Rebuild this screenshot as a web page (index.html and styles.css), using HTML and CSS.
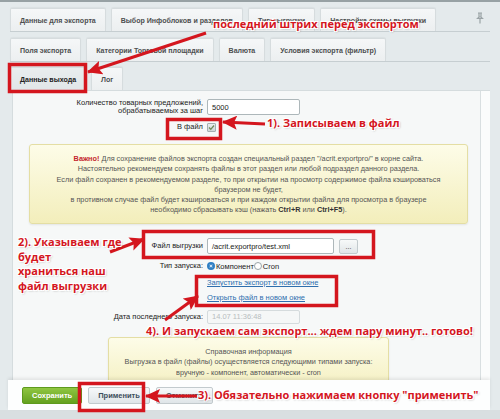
FILE: index.html
```html
<!DOCTYPE html>
<html lang="ru">
<head>
<meta charset="utf-8">
<title>Данные выхода</title>
<link rel="stylesheet" href="styles.css">
</head>
<body>
<div class="topline"></div>
<div class="wrap">
  <div class="tabrow r1">
    <div class="tab">Данные для экспорта</div>
    <div class="tab">Выбор Инфоблоков и разделов</div>
    <div class="tab">Тип выгрузки</div>
    <div class="tab">Настройка схемы выгрузки</div>
    <span class="pin"><svg width="8" height="12" viewBox="0 0 8 12"><path d="M2 1h4M3 1v4M5 1v4M1.5 6.5h5L5 5H3z M4 6.5V11.5" fill="none" stroke="#9aa3a6" stroke-width="1.2"/></svg></span>
  </div>
  <div class="tabrow r2">
    <div class="tab">Поля экспорта</div>
    <div class="tab">Категории Торговой площадки</div>
    <div class="tab">Валюта</div>
    <div class="tab">Условия экспорта (фильтр)</div>
  </div>
  <div class="tabrow r3">
    <div class="tab active">Данные выхода</div>
    <div class="tab">Лог</div>
  </div>
  <div class="panel">
    <div class="row r-count">
      <div class="lbl">Количество товарных предложений,<br>обрабатываемых за шаг</div>
      <div class="val"><span class="input w-num">5000</span></div>
    </div>
    <div class="row r-check">
      <div class="lbl">В файл</div>
      <div class="val"><span class="checkbox"><svg width="7" height="7" viewBox="0 0 7 7"><path d="M1 3.5l1.8 1.8L6 1.5" fill="none" stroke="#6f8a5a" stroke-width="1.3"/></svg></span></div>
    </div>
    <div class="notice n1">
      <p><b class="imp">Важно!</b> Для сохранение файлов экспорта создан специальный раздел "/acrit.exportpro/" в корне сайта.</p>
      <p>Настоятельно рекомендуем сохранять файлы в этот раздел или любой подраздел данного раздела.</p>
      <p>Если файл сохранен в рекомендуемом разделе, то при открытии на просмотр содержимое файла кэшироваться</p>
      <p>браузером не будет,</p>
      <p>в противном случае файл будет кэшироваться и при каждом открытии файла для просмотра в браузере</p>
      <p>необходимо сбрасывать кэш (нажать <b>Ctrl+R</b> или <b>Ctrl+F5</b>).</p>
    </div>
    <div class="row r-file">
      <div class="lbl">Файл выгрузки</div>
      <div class="val"><span class="input w-file">/acrit.exportpro/test.xml</span><span class="btn-dots">...</span></div>
    </div>
    <div class="row r-type">
      <div class="lbl">Тип запуска:</div>
      <div class="val"><span class="radio on"></span>Компонент<span class="radio"></span>Cron</div>
    </div>
    <div class="row r-link1">
      <div class="lbl"></div>
      <div class="val"><a class="link">Запустить экспорт в новом окне</a></div>
    </div>
    <div class="row r-link2">
      <div class="lbl"></div>
      <div class="val"><a class="link">Открыть файл в новом окне</a></div>
    </div>
    <div class="row r-date">
      <div class="lbl">Дата последнего запуска:</div>
      <div class="val"><span class="input dis w-num">14.07 11:36:48</span></div>
    </div>
    <div class="notice n2">
      <p>Справочная информация</p>
      <p>Выгрузка в файл (файлы) осуществляется следующими типами запуска:</p>
      <p>вручную - компонент, автоматически - cron</p>
    </div>
  </div>
</div>
<div class="footer">
  <span class="btn green">Сохранить</span>
  <span class="btn">Применить</span>
  <span class="btn">Отменить</span>
</div>
<div class="bottomline"></div>

<svg class="overlay" width="500" height="419" viewBox="0 0 500 419">
  <defs>
    <marker id="ah" markerUnits="userSpaceOnUse" markerWidth="16" markerHeight="14" refX="14" refY="7" orient="auto">
      <path d="M0 0L15 7L0 14L3 7z" fill="#d4161e"/>
    </marker>
  </defs>
  <g fill="none" stroke="#d4161e" stroke-width="3.5">
    <rect x="9.5" y="64.5" width="76" height="27"/>
    <rect x="167.5" y="119.5" width="53" height="19"/>
    <rect x="143.5" y="231.5" width="230" height="26"/>
    <rect x="196.5" y="276.5" width="140" height="29"/>
    <rect x="79.5" y="383.5" width="64" height="27"/>
  </g>
  <g stroke="#d4161e" stroke-width="3" marker-end="url(#ah)">
    <line x1="206" y1="33" x2="88" y2="72"/>
    <line x1="265" y1="124" x2="223" y2="122"/>
    <line x1="110" y1="252" x2="144" y2="239"/>
    <line x1="165" y1="320" x2="198" y2="296"/>
    <line x1="197" y1="396" x2="146" y2="396"/>
  </g>
</svg>
<div class="note t1">последний штрих перед экспортом</div>
<div class="note t2">1). Записываем в файл</div>
<div class="note t3">2). Указываем где<br>будет<br>храниться наш<br>файл выгрузки</div>
<div class="note t4">4). И запускаем сам экспорт... ждем пару минут.. готово!</div>
<div class="note t5">3). Обязательно нажимаем кнопку "применить"</div>
</body>
</html>
```
FILE: styles.css
```css
* { box-sizing: border-box; }
html, body { margin: 0; padding: 0; }
body {
  width: 500px;
  height: 419px;
  overflow: hidden;
  position: relative;
  background: #e4eaec;
  font-family: "Liberation Sans", Arial, sans-serif;
  font-size: 7.5px;
  color: #222;
}
.topline { height: 2px; background: #97a1a4; }
.wrap { padding: 0 10px 0 10px; }

.tabrow {
  display: flex;
  gap: 5px;
  align-items: flex-end;
  position: relative;
}
.r1 { margin-top: 6px; height: 24px; border-bottom: 1px solid #c6ced1; }
.r2 { margin-top: 6px; height: 24px; border-bottom: 1px solid #c6ced1; }
.r3 { margin-top: 5px; height: 23px; }
.tab {
  height: 23px;
  padding: 0 9px;
  display: flex;
  align-items: center;
  font-weight: bold;
  font-size: 7.05px;
  color: #4d4f50;
  background: linear-gradient(#f5f7f8, #eceff0);
  border: 1px solid #d6dcde;
  border-bottom: none;
  border-radius: 2px 2px 0 0;
  box-shadow: 0 -1px 1px rgba(0,0,0,0.04);
  white-space: nowrap;
}
.tab.active { background: linear-gradient(#e9edee, #e1e6e8); color: #222; }
.pin { position: absolute; right: 6px; top: 4px; }

.panel {
  margin: 0 0 0 2px;
  height: 290px;
  overflow: hidden;
  background: linear-gradient(to right, #f6f8f8 0, #f6f8f8 467px, #d9dfe1 467px, #d9dfe1 468px, #fbfcfc 468px);
  border: 1px solid #d5dcde;
  border-bottom: none;
  border-right: none;
  padding-top: 8px;
}
.row { display: flex; align-items: center; }
.lbl { width: 190px; text-align: right; color: #222; line-height: 8px; }
.val { margin-left: 4px; display: flex; align-items: center; }
.r-count { height: 16px; }
.r-check { margin-top: 5px; height: 14px; }
.r-file { margin-top: 14px; height: 16px; }
.r-type { margin-top: 6px; height: 12px; }
.r-link1 { margin-top: 4px; height: 12px; }
.r-link2 { margin-top: 3px; height: 12px; }
.r-date { margin-top: 6px; height: 15px; }

.input {
  display: flex;
  align-items: center;
  height: 16px;
  padding-left: 4px;
  background: #fff;
  border: 1px solid #adb7ba;
  border-radius: 2px;
  color: #222;
}
.w-num { width: 93px; }
.w-file { width: 127px; }
.input.dis { height: 14px; background: #f5f7f7; border-color: #d5dbdd; color: #b7bdc0; }
.btn-dots {
  margin-left: 5px;
  width: 19px;
  height: 15px;
  border: 1px solid #c2cacd;
  border-radius: 2px;
  background: linear-gradient(#f7f9f9, #e1e6e8);
  display: flex;
  align-items: center;
  justify-content: center;
  color: #333;
  font-size: 7px;
}
.checkbox {
  width: 9px;
  height: 9px;
  border: 1px solid #a5aeb1;
  border-radius: 1px;
  background: linear-gradient(#e9eded, #cfd6d8);
  display: flex;
  align-items: center;
  justify-content: center;
}
.radio {
  width: 8px;
  height: 8px;
  border-radius: 50%;
  border: 1px solid #9aa4a8;
  background: #fff;
  margin-right: 1px;
}
.radio.on { border: 2px solid #2f7fc4; background: #fff; box-shadow: inset 0 0 0 1px #2f7fc4; }
.link { color: #2e6fae; text-decoration: underline; }

.notice {
  background: linear-gradient(#fdfce8, #f3eebb);
  border: 1px solid #e4dea4;
  border-radius: 3px;
  box-shadow: 0 1px 2px rgba(0,0,0,0.08);
  text-align: center;
  color: #555;
  font-size: 7.3px;
  line-height: 10.3px;
}
.notice p { margin: 0; }
.notice b { color: #333; }
.notice .imp { color: #c4262e; }
.n1 { margin: 10px 22px 0 16px; height: 80px; padding-top: 9px; }
.n2 { margin: 13px 0 0 95px; width: 281px; height: 60px; padding-top: 9px; }

.footer {
  margin: 0 10px 0 8px;
  height: 30px;
  background: #fdfefe;
  box-shadow: 0 -2px 3px rgba(0,0,0,0.08);
  display: flex;
  align-items: center;
  gap: 6px;
  padding: 0 0 0 14px;
  position: relative;
}
.btn {
  height: 17px;
  padding: 0 9px;
  display: flex;
  align-items: center;
  font-weight: bold;
  color: #3d4f5c;
  border: 1px solid #c2cacd;
  border-radius: 2px;
  background: linear-gradient(#f7f9fa, #dfe5e8);
}
.btn.green {
  color: #fff;
  border-color: #5d9a1c;
  background: linear-gradient(#8fc641, #64a11f);
}
.bottomline { height: 9px; background: #d9dfe1; }

.overlay { position: absolute; left: 0; top: 0; }
.note {
  position: absolute;
  font-family: "Open Sans", "Noto Sans", sans-serif;
  font-weight: bold;
  font-size: 11px;
  line-height: 14px;
  color: #d4161e;
  white-space: nowrap;
  text-shadow: 1px 1px 0 #fff, -1px -1px 0 #fff, 1px -1px 0 #fff, -1px 1px 0 #fff, 1px 1px 2px rgba(0,0,0,0.35);
}
.t1 { left: 213px; top: 17px; }
.t2 { left: 267px; top: 116px; }
.t3 { left: 18px; top: 235px; line-height: 14.7px; }
.t4 { left: 146px; top: 324px; }
.t5 { left: 198px; top: 388px; }
```
